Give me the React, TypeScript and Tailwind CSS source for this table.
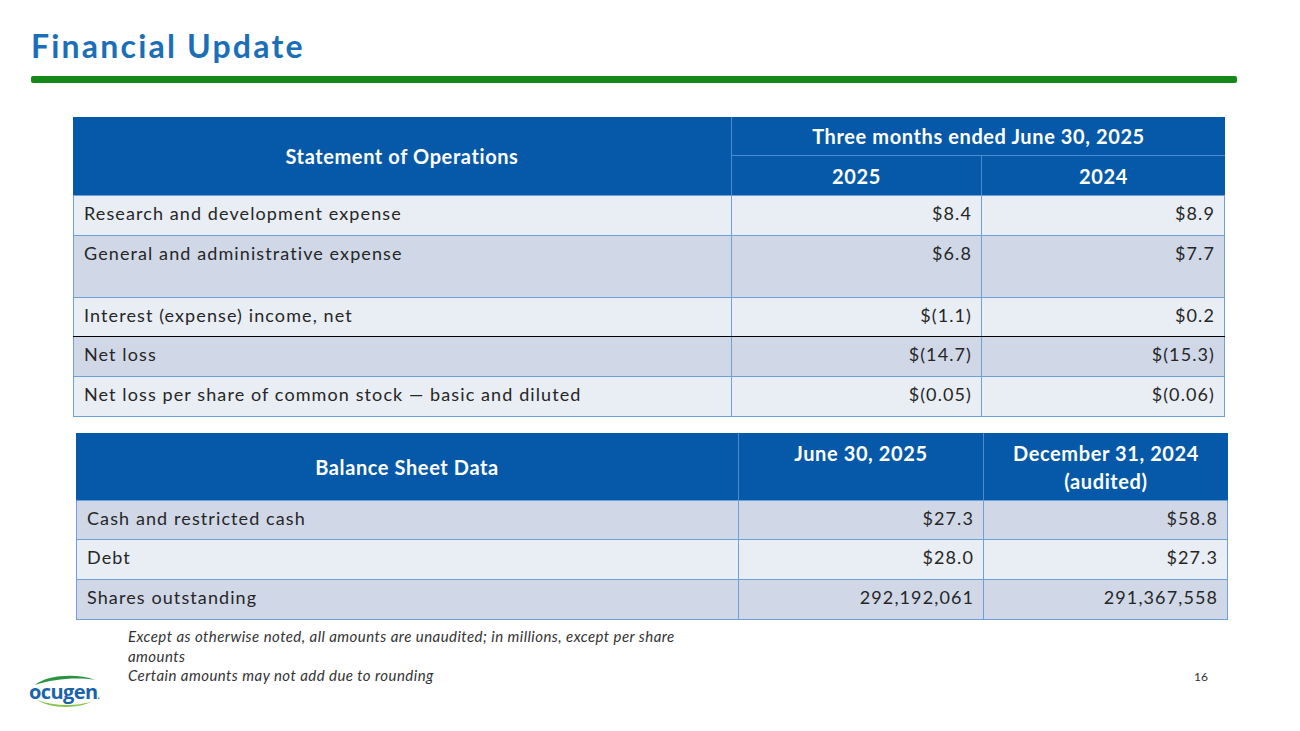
import React from "react";

const FONT = { fontFamily: "Lato, 'Open Sans', 'Liberation Sans', sans-serif" };

type Row = { label: string; a: string; b: string; tone: "light" | "dark"; h: string; topBorder?: string };

const OPS: Row[] = [
  { label: "Research and development expense", a: "$8.4", b: "$8.9", tone: "light", h: "h-[40px]" },
  { label: "General and administrative expense", a: "$6.8", b: "$7.7", tone: "dark", h: "h-[62px]" },
  { label: "Interest (expense) income, net", a: "$(1.1)", b: "$0.2", tone: "light", h: "h-[39px]" },
  { label: "Net loss", a: "$(14.7)", b: "$(15.3)", tone: "dark", h: "h-[40px]", topBorder: "border-t-black" },
  { label: "Net loss per share of common stock — basic and diluted", a: "$(0.05)", b: "$(0.06)", tone: "light", h: "h-[40px]" },
];

const BAL: Row[] = [
  { label: "Cash and restricted cash", a: "$27.3", b: "$58.8", tone: "dark", h: "h-[39px]" },
  { label: "Debt", a: "$28.0", b: "$27.3", tone: "light", h: "h-[40px]" },
  { label: "Shares outstanding", a: "292,192,061", b: "291,367,558", tone: "dark", h: "h-[40px]" },
];

function BodyRow({ r, cols }: { r: Row; cols: string }) {
  const bg = r.tone === "light" ? "bg-[#e9edf4]" : "bg-[#d0d8e8]";
  return (
    <div className={`grid ${cols} ${r.h} ${bg} border-t ${r.topBorder ?? "border-t-[#6fa0d8]"} text-[18px] leading-[22px] tracking-[1.1px] text-[#262626]`}>
      <div className="px-[10px] pt-[6px] border-l border-[#6fa0d8]">{r.label}</div>
      <div className="px-[9px] pt-[6px] text-right border-l border-[#6fa0d8]">{r.a}</div>
      <div className="px-[9px] pt-[6px] text-right border-l border-r border-[#6fa0d8]">{r.b}</div>
    </div>
  );
}

function Logo() {
  return (
    <div className="relative w-[70px] h-[42px]">
      <svg width="70" height="42" viewBox="0 0 70 42" className="absolute left-0 top-0">
        <path d="M8 14 C 20 4, 50 2, 68 9 C 50 6, 26 8, 8 14 Z" fill="#2a9440" />
        <path d="M10 29 C 24 38, 52 38, 66 30 C 52 35, 28 36, 10 29 Z" fill="#86c449" />
      </svg>
      <div className="absolute left-[2px] top-[11px] text-[20px] font-bold tracking-[-0.6px] text-[#1b63a8] leading-none" style={{ fontFamily: "'Open Sans', Lato, sans-serif" }}>
        ocugen<span className="text-[8px]">.</span>
      </div>
    </div>
  );
}

export default function App() {
  const opsCols = "grid-cols-[658px_250px_244px]";
  const balCols = "grid-cols-[662px_245px_245px]";
  return (
    <div className="w-[1300px] h-[731px] bg-white relative overflow-hidden" style={FONT}>
      <div className="pl-[31px] pt-[26px]">
        <h1 className="text-[32px] font-bold leading-[40px] text-[#1a6fb8] tracking-[2.2px]">Financial Update</h1>
        <div className="mt-[10px] w-[1206px] h-[7px] rounded-[2px] bg-[#14891a]" />
      </div>

      <div className="ml-[73px] mt-[34px] w-[1152px]">
        <div className={`grid ${opsCols} bg-[#0659a8] text-white font-bold text-[20px] tracking-[0.6px]`}>
          <div className="row-span-2 flex items-center justify-center h-[78px]">Statement of Operations</div>
          <div className="col-span-2 h-[38px] flex items-center justify-center border-l border-[#4a8ad0]">Three months ended June 30, 2025</div>
          <div className="h-[40px] flex items-center justify-center border-l border-t border-[#4a8ad0]">2025</div>
          <div className="h-[40px] flex items-center justify-center border-l border-t border-[#4a8ad0]">2024</div>
        </div>
        {OPS.map((r) => (
          <BodyRow key={r.label} r={r} cols={opsCols} />
        ))}
        <div className="border-t border-[#6fa0d8]" />
      </div>

      <div className="ml-[76px] mt-[16px] w-[1152px]">
        <div className={`grid ${balCols} h-[67px] bg-[#0659a8] text-white font-bold text-[20px] tracking-[0.6px] leading-[28px]`}>
          <div className="flex items-center justify-center">Balance Sheet Data</div>
          <div className="flex justify-center pt-[6px] border-l border-[#4a8ad0]">June 30, 2025</div>
          <div className="flex flex-col items-center pt-[6px] border-l border-[#4a8ad0]">
            <span>December 31, 2024</span>
            <span>(audited)</span>
          </div>
        </div>
        {BAL.map((r) => (
          <BodyRow key={r.label} r={r} cols={balCols} />
        ))}
        <div className="border-t border-[#6fa0d8]" />
      </div>

      <div className="ml-[128px] mt-[6px] w-[560px] italic text-[15px] leading-[20px] tracking-[0.45px] text-[#333]">
        <p>Except as otherwise noted, all amounts are unaudited; in millions, except per share amounts</p>
        <p className="-mt-[1px]">Certain amounts may not add due to rounding</p>
      </div>

      <div className="absolute left-[1194px] top-[668px] text-[12px] text-[#333]">16</div>
      <div className="absolute left-[27px] top-[671px]">
        <Logo />
      </div>
    </div>
  );
}
